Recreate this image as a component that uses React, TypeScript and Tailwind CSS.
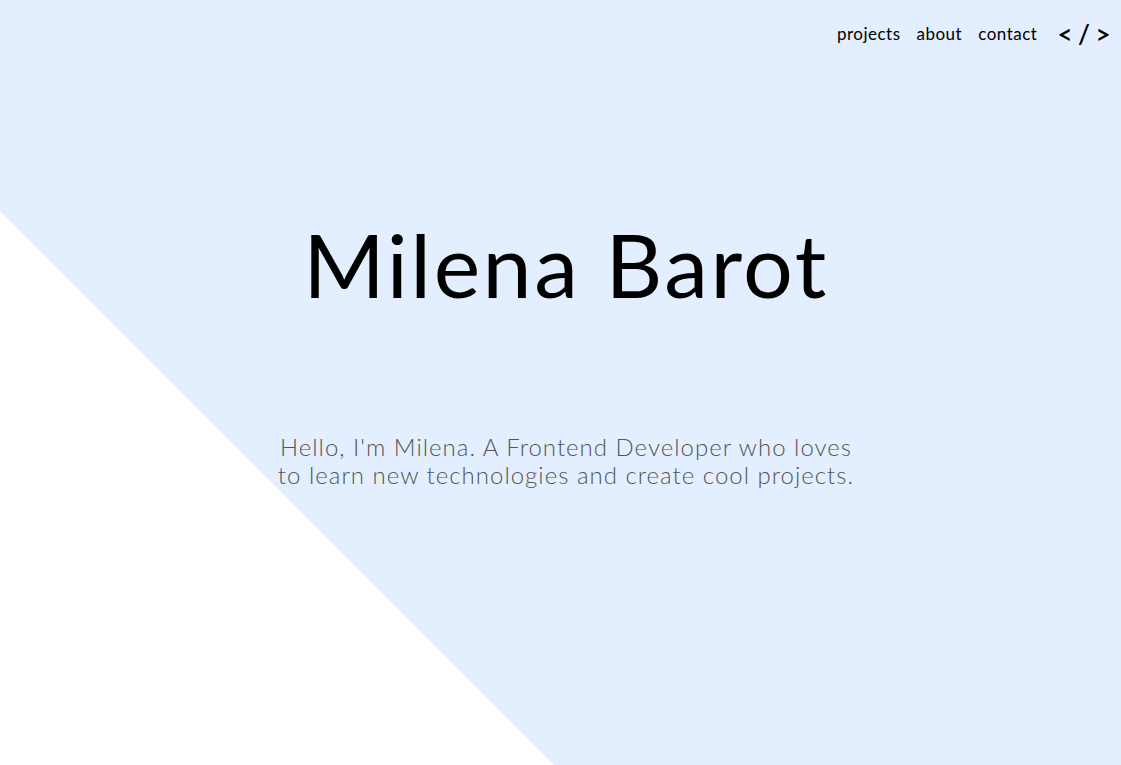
export default function App() {
  return (
    <div className="relative w-full h-[765px] bg-white overflow-hidden font-['Lato',sans-serif]">
      <div className="absolute inset-0 bg-[#e3efff] [clip-path:polygon(0_0,100%_0,100%_100%,554px_100%,0_211px)]" />
      <div className="relative flex flex-col h-full">
        <nav className="flex justify-end items-center gap-[16px] pr-[11px] pt-[22px] text-[17px] text-black tracking-[0.5px]">
          <a className="leading-[24px]">projects</a>
          <a className="leading-[24px]">about</a>
          <a className="leading-[24px]">contact</a>
          <span className="ml-[4px] text-[26px] leading-[24px] font-semibold tracking-[-0.5px]">&lt; / &gt;</span>
        </nav>
        <div className="flex flex-col pl-[11px]">
          <h1 className="mt-[168px] text-center text-[88px] leading-[100px] text-black tracking-[2.5px]">Milena Barot</h1>
          <p className="mt-[119px] text-center text-[24px] leading-[28px] text-[#555555] font-light tracking-[1px]">
            Hello, I'm Milena. A Frontend Developer who loves
            <br />
            to learn new technologies and create cool projects.
          </p>
        </div>
      </div>
    </div>
  );
}
